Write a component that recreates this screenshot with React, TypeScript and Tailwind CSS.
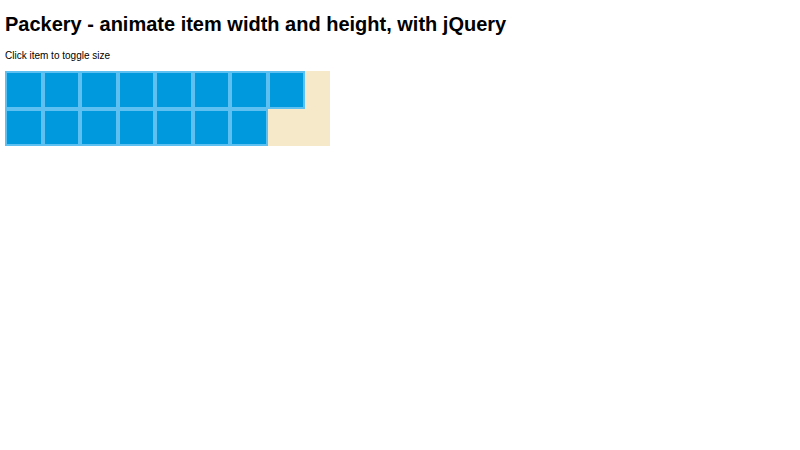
import React, { useState } from "react";

export default function App() {
  const [big, setBig] = useState<number | null>(null);
  const items = Array.from({ length: 15 }, (_, i) => i);

  return (
    <div className="px-[5px] font-['Liberation_Sans',Arial,sans-serif] text-black">
      <h1 className="pt-[13.4px] text-[20px] font-bold leading-[23px]">
        Packery - animate item width and height, with jQuery
      </h1>
      <p className="mt-[13.4px] text-[10px] leading-[11.5px]">Click item to toggle size</p>
      <div className="mt-[10px] flex w-[325px] flex-wrap content-start bg-[#f5e9c9] min-h-[75px]">
        {items.map((i) => (
          <div
            key={i}
            onClick={() => setBig(big === i ? null : i)}
            className={
              big === i
                ? "h-[75px] w-[75px] cursor-pointer border-2 border-[#5ec0f0] bg-[#0099dd]"
                : "h-[37.5px] w-[37.5px] cursor-pointer border-2 border-[#5ec0f0] bg-[#0099dd]"
            }
          />
        ))}
      </div>
    </div>
  );
}
